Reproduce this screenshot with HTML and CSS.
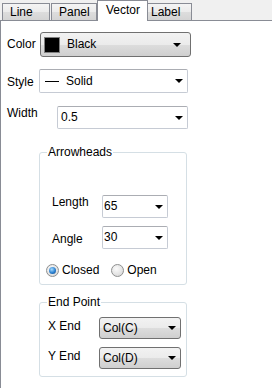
FILE: index.html
```html
<!DOCTYPE html>
<html lang="en">
<head>
    <meta charset="UTF-8">
    <meta name="viewport" content="width=device-width, initial-scale=1.0">
    <title>Vector Properties</title>
    <link rel="stylesheet" href="styles.css">
</head>
<body>

    <div class="tabs">
        <div class="tab tab-line">Line</div>
        <div class="tab tab-panel">Panel</div>
        <div class="tab tab-vector active">Vector</div>
        <div class="tab tab-label">Label</div>
    </div>

    <div class="panel">
        <div class="row row-color">
            <span class="label label-color">Color</span>
            <div class="combo combo-gray combo-color">
                <span class="swatch"></span>
                <span class="value">Black</span>
                <span class="arrow"></span>
            </div>
        </div>

        <div class="row row-style">
            <span class="label label-style">Style</span>
            <div class="combo combo-white combo-style">
                <span class="line-sample"></span>
                <span class="value">Solid</span>
                <span class="arrow"></span>
            </div>
        </div>

        <div class="row row-width">
            <span class="label label-width">Width</span>
            <div class="combo combo-white combo-width">
                <span class="value">0.5</span>
                <span class="arrow"></span>
            </div>
        </div>

        <fieldset class="group group-arrows">
            <legend>Arrowheads</legend>
            <div class="group-body">
                <div class="row">
                    <span class="label label-length">Length</span>
                    <div class="combo combo-white combo-small">
                        <span class="value">65</span>
                        <span class="arrow"></span>
                    </div>
                </div>
                <div class="row row-angle">
                    <span class="label label-angle">Angle</span>
                    <div class="combo combo-white combo-small">
                        <span class="value">30</span>
                        <span class="arrow"></span>
                    </div>
                </div>
                <div class="radios">
                    <div class="option option-closed">
                        <span class="radio checked"><span class="dot"></span></span>
                        <span>Closed</span>
                    </div>
                    <div class="option">
                        <span class="radio"></span>
                        <span>Open</span>
                    </div>
                </div>
            </div>
        </fieldset>

        <fieldset class="group group-end">
            <legend>End Point</legend>
            <div class="group-body">
                <div class="row">
                    <span class="label label-end">X End</span>
                    <div class="combo combo-gray combo-col">
                        <span class="value">Col(C)</span>
                        <span class="arrow"></span>
                    </div>
                </div>
                <div class="row row-yend">
                    <span class="label label-end">Y End</span>
                    <div class="combo combo-gray combo-col">
                        <span class="value">Col(D)</span>
                        <span class="arrow"></span>
                    </div>
                </div>
            </div>
        </fieldset>
    </div>

</body>
</html>
```

FILE: styles.css
```css
* {
    box-sizing: border-box;
}

body {
    margin: 0;
    padding: 0;
    width: 272px;
    height: 388px;
    overflow: hidden;
    font-family: 'Liberation Sans', Arial, sans-serif;
    font-size: 12px;
    line-height: 15px;
    color: #000;
    background-color: #fff;
}

/* tab strip */

.tabs {
    display: flex;
    align-items: flex-end;
    height: 21px;
    padding-left: 2px;
    background-color: #f0f0f0;
    border-bottom: 1px solid #898c95;
}

.tab {
    height: 17px;
    padding: 1px 0 0 7px;
    border: 1px solid #898c95;
    border-bottom: none;
    background: linear-gradient(#f4f4f4, #ebebeb 50%, #dddddd 51%, #d4d4d4);
}

.tab-line {
    width: 48px;
    margin-right: 1px;
}

.tab-panel {
    width: 46px;
}

.tab-vector {
    width: 51px;
}

.tab-label {
    width: 45px;
    margin-left: -1px;
    padding-left: 3px;
}

.tab.active {
    height: 21px;
    margin-bottom: -1px;
    padding: 2px 0 0 8px;
    background: #fff;
    position: relative;
}

/* content panel */

.panel {
    height: 367px;
    padding-left: 6px;
    border-left: 1px solid #898c95;
    background-color: #fff;
}

.row {
    display: flex;
    align-items: flex-start;
}

.row-color {
    padding-top: 11px;
}

.row-style {
    margin-top: 12px;
}

.row-width {
    margin-top: 13px;
}

.label-color {
    width: 33px;
    padding-top: 5px;
}

.label-style {
    width: 32px;
    padding-top: 6px;
}

.label-width {
    width: 50px;
}

/* combo boxes */

.combo {
    display: flex;
    align-items: center;
    padding-left: 3px;
}

.combo-gray {
    border: 1px solid #707070;
    border-radius: 3px;
    background: linear-gradient(#f2f2f2, #ebebeb 50%, #dddddd 51%, #cfcfcf);
}

.combo-white {
    border: 1px solid #c6cbd4;
    border-top-color: #abadb3;
    border-radius: 2px;
    background-color: #fff;
}

.arrow {
    width: 0;
    height: 0;
    margin-left: auto;
    margin-right: 4px;
    border-left: 4px solid transparent;
    border-right: 4px solid transparent;
    border-top: 4px solid #000;
}

.combo-color {
    width: 151px;
    height: 25px;
    padding-left: 3px;
}

.combo-color .arrow {
    margin-right: 9px;
}

.swatch {
    width: 16px;
    height: 16px;
    margin-right: 7px;
    border: 1px solid #808080;
    background-color: #000;
    box-shadow: inset 0 0 0 1px #000;
}

.combo-style {
    width: 149px;
    height: 24px;
    padding-left: 5px;
}

.line-sample {
    width: 14px;
    height: 1px;
    margin-right: 7px;
    background-color: #000;
}

.combo-width {
    width: 131px;
    height: 23px;
}

.combo-small {
    width: 66px;
    height: 23px;
    padding-left: 1px;
}

.combo-col {
    width: 82px;
    height: 22px;
}

/* group boxes */

.group {
    width: 148px;
    margin: 0 0 0 32px;
    padding: 0;
    border: 1px solid #d5dfe5;
    border-radius: 3px;
}

.group legend {
    margin-left: 7px;
    padding: 0 1px;
}

.group-arrows {
    margin-top: 16px;
}

.group-arrows .group-body {
    padding: 35px 0 6px 12px;
}

.label-length {
    width: 50px;
}

.row-angle {
    margin-top: 8px;
}

.label-angle {
    width: 50px;
    padding-top: 6px;
}

.radios {
    display: flex;
    align-items: center;
    margin-top: 14px;
    margin-left: -6px;
}

.option {
    display: flex;
    align-items: center;
    gap: 3px;
}

.option-closed {
    margin-right: 12px;
}

.radio {
    display: flex;
    align-items: center;
    justify-content: center;
    width: 13px;
    height: 13px;
    border: 1px solid #8e8f8f;
    border-radius: 50%;
    background: radial-gradient(circle at 40% 35%, #fbfbfb, #d2d2d2);
}

.radio .dot {
    width: 7px;
    height: 7px;
    border-radius: 50%;
    background: radial-gradient(circle at 40% 35%, #a6dcff, #2a7fd0 55%, #10457f);
}

.group-end {
    margin-top: 10px;
}

.group-end .group-body {
    padding: 7px 0 7px 8px;
}

.label-end {
    width: 51px;
    padding-top: 2px;
}

.row-yend {
    margin-top: 8px;
}
```
